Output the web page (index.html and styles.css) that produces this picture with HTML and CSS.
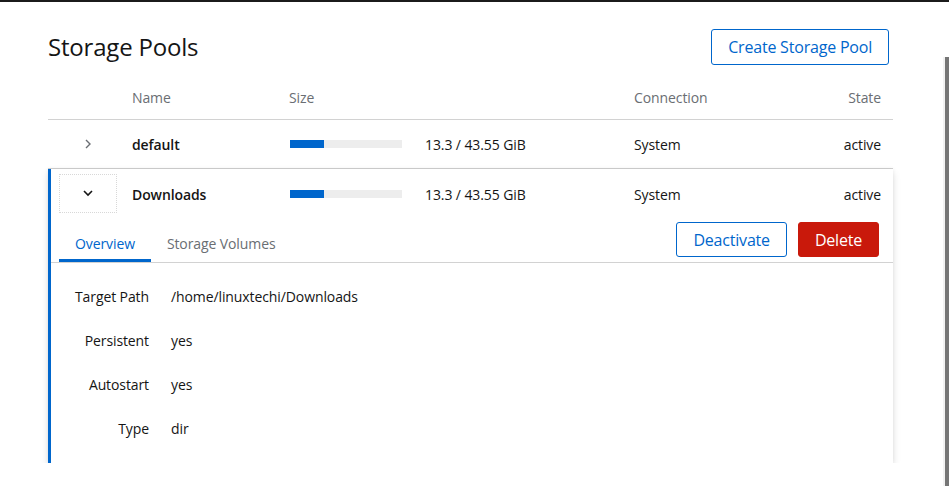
FILE: index.html
```html
<!DOCTYPE html>
<html lang="en">
<head>
<meta charset="utf-8">
<title>Storage Pools</title>
<link rel="stylesheet" href="styles.css">
</head>
<body>
<div class="topbar"></div>
<main class="page">
  <header class="page-head">
    <h1 class="title">Storage Pools</h1>
    <button class="btn btn-secondary">Create Storage Pool</button>
  </header>

  <div class="table">
    <div class="row row-head">
      <div></div>
      <div>Name</div>
      <div>Size</div>
      <div>Connection</div>
      <div class="state">State</div>
    </div>

    <div class="row row-body">
      <div class="toggle-cell">
        <span class="toggle">
          <svg class="chev chev-right" width="8" height="10" viewBox="0 0 8 10"><path d="M2 1 L6 5 L2 9" fill="none" stroke="currentColor" stroke-width="1.4"/></svg>
        </span>
      </div>
      <div class="name">default</div>
      <div class="size">
        <span class="bar"><span class="fill" style="width:30.5%"></span></span>
        <span class="size-text">13.3 / 43.55 GiB</span>
      </div>
      <div>System</div>
      <div class="state">active</div>
    </div>

    <section class="expanded">
      <div class="row row-body row-open">
        <div class="toggle-cell">
          <span class="toggle toggle-focus">
            <svg class="chev" width="12" height="8" viewBox="0 0 12 8"><path d="M2 2 L6 6 L10 2" fill="none" stroke="currentColor" stroke-width="1.6"/></svg>
          </span>
        </div>
        <div class="name">Downloads</div>
        <div class="size">
          <span class="bar"><span class="fill" style="width:30.5%"></span></span>
          <span class="size-text">13.3 / 43.55 GiB</span>
        </div>
        <div>System</div>
        <div class="state">active</div>
      </div>

      <div class="tabbar">
        <nav class="tabs">
          <span class="tab tab-active">Overview</span>
          <span class="tab">Storage Volumes</span>
        </nav>
        <div class="actions">
          <button class="btn btn-secondary">Deactivate</button>
          <button class="btn btn-danger">Delete</button>
        </div>
      </div>

      <dl class="details">
        <dt>Target Path</dt><dd>/home/linuxtechi/Downloads</dd>
        <dt>Persistent</dt><dd>yes</dd>
        <dt>Autostart</dt><dd>yes</dd>
        <dt>Type</dt><dd>dir</dd>
      </dl>
    </section>
  </div>
</main>
<div class="scrollbar"></div>
</body>
</html>
```

FILE: styles.css
```css
* { box-sizing: border-box; }

html, body {
  margin: 0;
  padding: 0;
  background: #fff;
  color: #151515;
  font-family: "Open Sans", "Liberation Sans", sans-serif;
  font-size: 14px;
  letter-spacing: -0.1px;
  overflow: hidden;
}

.topbar {
  height: 2px;
  background: #1b1b1b;
}

.page {
  padding: 27px 56px 0 48px;
}

.page-head {
  display: flex;
  justify-content: space-between;
  align-items: center;
  height: 36px;
  margin-right: 4px;
}

.title {
  margin: -2px 0 0;
  font-size: 24px;
  font-weight: 400;
  letter-spacing: -0.2px;
  color: #151515;
}

.btn {
  font-family: inherit;
  font-size: 16px;
  letter-spacing: -0.2px;
  height: 36px;
  padding: 0 16px;
  border-radius: 3px;
  background: #fff;
  cursor: pointer;
  line-height: 1;
}

.btn-secondary {
  border: 1px solid #0066cc;
  color: #0066cc;
}

.btn-danger {
  border: 1px solid #c9190b;
  background: #c9190b;
  color: #fff;
}

.table {
  margin-top: 10px;
}

.row {
  display: grid;
  grid-template-columns: 84px 157px 345px 1fr auto;
  align-items: center;
  padding-right: 12px;
}

.row-head {
  height: 45px;
  color: #6a6e73;
  border-bottom: 1px solid #d2d2d2;
}

.row-body {
  height: 49px;
  border-bottom: 1px solid #d2d2d2;
}

.row-open {
  height: 50px;
  border-bottom: none;
}

.state {
  text-align: right;
}

.name {
  font-weight: 600;
}

.toggle-cell {
  display: flex;
  padding-left: 12px;
}

.toggle {
  display: flex;
  align-items: center;
  justify-content: center;
  width: 56px;
  height: 37px;
  color: #6a6e73;
}

.toggle-focus {
  color: #151515;
  outline: 1px dotted #d8d8d8;
  margin-top: -2px;
}

.size {
  display: flex;
  align-items: center;
}

.bar {
  display: block;
  width: 112px;
  height: 8px;
  background: #ededed;
  margin-left: 1px;
}

.fill {
  display: block;
  height: 100%;
  background: #0066cc;
}

.size-text {
  margin-left: 23px;
}

.expanded {
  box-shadow: inset 3px 0 0 #0066cc, 0 4px 8px 0 rgba(3, 3, 3, 0.12), 0 0 4px 0 rgba(3, 3, 3, 0.06);
}

.tabbar {
  display: flex;
  justify-content: space-between;
  align-items: flex-end;
  margin-left: 3px;
  border-bottom: 1px solid #d2d2d2;
  padding-right: 14px;
}

.tabs {
  display: flex;
  margin-left: 8px;
}

.tab {
  display: block;
  padding: 10px 16px 0;
  height: 43px;
  line-height: 30px;
  color: #6a6e73;
  border-bottom: 3px solid transparent;
}

.tab-active {
  color: #0066cc;
  border-bottom-color: #0066cc;
}

.actions {
  display: flex;
  gap: 11px;
  margin-bottom: 5px;
}

.actions .btn {
  height: 35px;
}

.details {
  display: grid;
  grid-template-columns: auto 1fr;
  column-gap: 22px;
  row-gap: 0;
  margin: 0;
  padding: 12px 0 12px 27px;
}

.details dt,
.details dd {
  margin: 0;
  height: 44px;
  line-height: 44px;
}

.details dt {
  text-align: right;
}

.scrollbar {
  position: fixed;
  right: 0;
  top: 57px;
  bottom: 0;
  width: 4px;
  background: #767676;
  box-shadow: -2px 0 0 #f2f2f2;
}
```
